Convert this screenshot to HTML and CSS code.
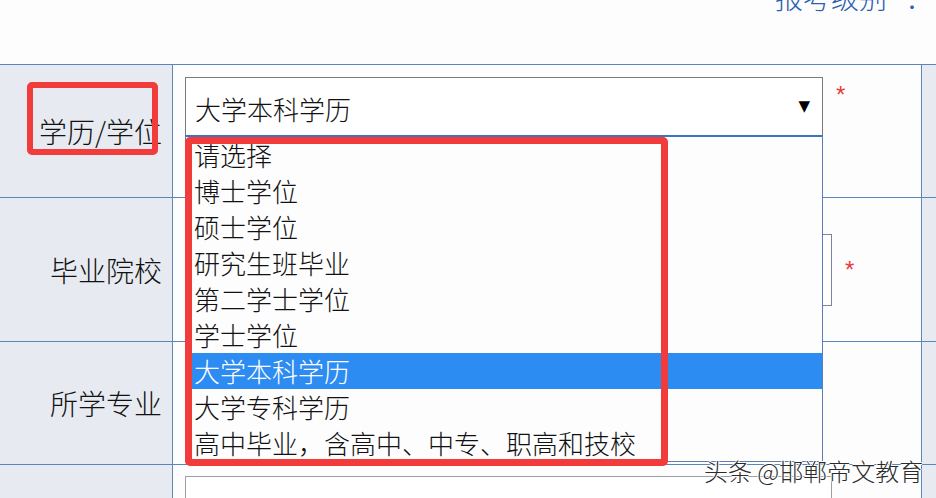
FILE: index.html
```html
<!DOCTYPE html>
<html lang="zh-CN">
<head>
<meta charset="utf-8">
<title>报名信息</title>
<link rel="stylesheet" href="styles.css">
</head>
<body>
<div class="page">
  <div class="top">
    <span class="level-name">报考级别</span><span class="level-colon">：</span>
  </div>
  <div class="form">
    <div class="label">学历/学位</div>
    <div class="field field-edu">
      <div class="select-wrap">
        <div class="select"><span class="select-value">大学本科学历</span><span class="arrow">▼</span></div>
        <ul class="options">
          <li>请选择</li>
          <li>博士学位</li>
          <li>硕士学位</li>
          <li>研究生班毕业</li>
          <li>第二学士学位</li>
          <li>学士学位</li>
          <li class="selected">大学本科学历</li>
          <li>大学专科学历</li>
          <li>高中毕业，含高中、中专、职高和技校</li>
        </ul>
      </div>
      <span class="req req-top">*</span>
    </div>
    <div class="side"></div>

    <div class="label">毕业院校</div>
    <div class="field field-center"><div class="input"></div><span class="req">*</span></div>
    <div class="side"></div>

    <div class="label">所学专业</div>
    <div class="field field-center"><div class="input input-narrow"></div></div>
    <div class="side"></div>

    <div class="label"></div>
    <div class="field field-last"><div class="input input-last"></div></div>
    <div class="side"></div>
  </div>

  <div class="mark mark-label"></div>
  <div class="mark mark-list"></div>
  <div class="watermark">头条 @邯郸帝文教育</div>
</div>
</body>
</html>
```

FILE: styles.css
```css
* { box-sizing: border-box; }

html, body {
  margin: 0;
  padding: 0;
}

body {
  width: 936px;
  height: 498px;
  overflow: hidden;
  background: #fdfdfe;
  font-family: "Noto Sans CJK SC", "Noto Sans", sans-serif;
  font-weight: 300;
  color: #111;
}

.page {
  position: relative;
  width: 936px;
  height: 498px;
  overflow: hidden;
}

.top {
  height: 64px;
  display: flex;
  align-items: flex-start;
  padding-left: 775px;
}

.level-name,
.level-colon {
  font-size: 28px;
  line-height: 28px;
  margin-top: -17px;
  color: #2a5fae;
}

.level-colon {
  margin-left: 18px;
}

.form {
  display: grid;
  grid-template-columns: 172px 748px 14px;
  grid-template-rows: 132px 143px 122px 40px;
  gap: 1px;
  background: #5a86bb;
  border-top: 1px solid #5a86bb;
}

.label {
  background: #e7eaf0;
  display: flex;
  align-items: center;
  justify-content: flex-end;
  padding-right: 10px;
  font-size: 28px;
  color: #111;
}

.side {
  background: #e7eaf0;
}

.field {
  background: #fdfdfe;
  display: flex;
  padding-left: 12px;
}

.field-edu {
  align-items: flex-start;
  padding-top: 12px;
  position: relative;
  z-index: 2;
}

.field-center {
  align-items: center;
}

.field-last {
  align-items: flex-start;
  padding-top: 11px;
}

.select-wrap {
  position: relative;
  width: 638px;
}

.select {
  height: 58px;
  border: 1px solid #7a7a7a;
  border-bottom: none;
  background: #fff;
  display: flex;
  align-items: center;
  justify-content: space-between;
  padding: 4px 12px 0 9px;
  font-size: 26px;
}

.arrow {
  font-family: "DejaVu Sans", sans-serif;
  font-weight: 400;
  font-size: 15px;
  color: #000;
  margin-top: -6px;
}

.options {
  position: absolute;
  top: 58px;
  left: 0;
  width: 638px;
  margin: 0;
  padding: 0;
  list-style: none;
  background: #fdfdfe;
  border: 1px solid #5a7fb4;
  border-top: 2px solid #3f74c0;
}

.options li {
  height: 36px;
  line-height: 36px;
  padding-left: 8px;
  font-size: 26px;
  color: #111;
  white-space: nowrap;
}

.options li.selected {
  background: #2d8cf2;
  color: #fff;
}

.req {
  font-family: "Liberation Sans", sans-serif;
  font-weight: 400;
  font-size: 24px;
  color: #e8393c;
  margin-left: 13px;
}

.req-top {
  margin-top: 4px;
  margin-left: 13px;
}

.input {
  width: 647px;
  height: 72px;
  border: 1px solid #7c8496;
  background: #fff;
}

.input-narrow {
  width: 638px;
}

.input-last {
  height: 60px;
  border-color: #9aa0aa;
}

.mark {
  position: absolute;
  border: 6px solid #f23b3b;
  border-radius: 5px;
  z-index: 5;
}

.mark-label {
  left: 27px;
  top: 82px;
  width: 131px;
  height: 73px;
}

.mark-list {
  left: 185px;
  top: 137px;
  width: 483px;
  height: 329px;
  border-width: 7px;
}

.watermark {
  position: absolute;
  left: 704px;
  top: 453px;
  font-size: 24px;
  color: #2b2b2b;
  z-index: 6;
  white-space: nowrap;
  text-shadow: 1px 0 0 #fff, -1px 0 0 #fff, 0 1px 0 #fff, 0 -1px 0 #fff;
}
```
